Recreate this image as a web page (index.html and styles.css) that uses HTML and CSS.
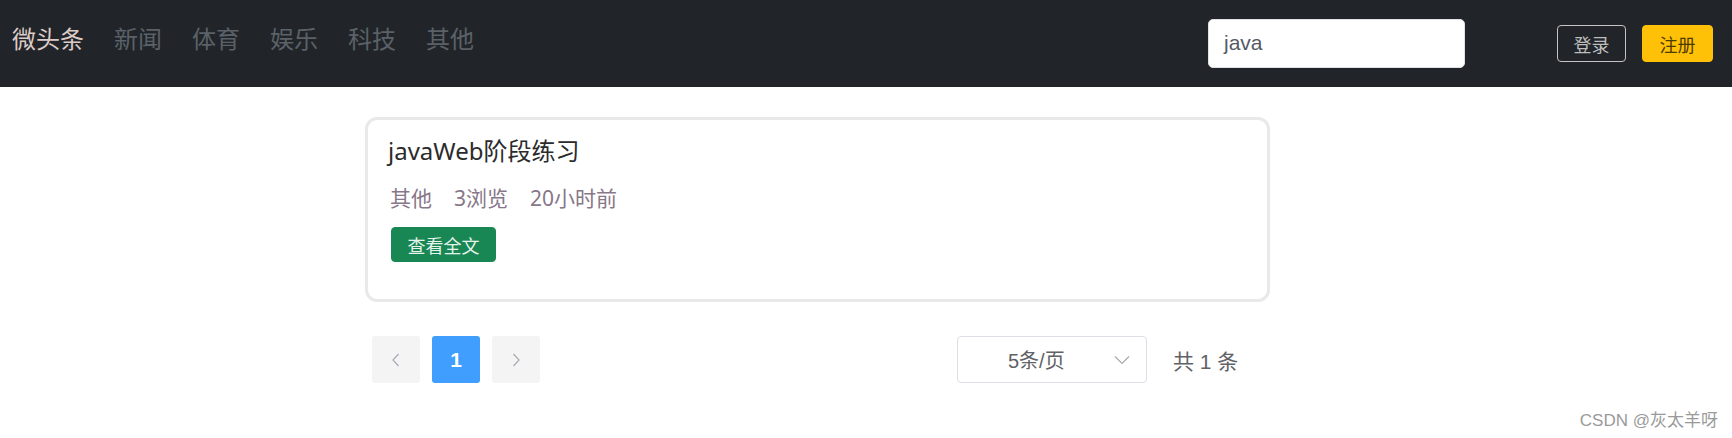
FILE: index.html
```html
<!DOCTYPE html>
<html lang="zh-CN">
<head>
<meta charset="utf-8">
<title>微头条</title>
<link rel="stylesheet" href="styles.css">
</head>
<body>
<header class="navbar">
  <nav class="nav-left">
    <a class="brand">微头条</a>
    <a class="nav-link">新闻</a>
    <a class="nav-link">体育</a>
    <a class="nav-link">娱乐</a>
    <a class="nav-link">科技</a>
    <a class="nav-link">其他</a>
  </nav>
  <div class="nav-right">
    <div class="search">java</div>
    <button class="btn btn-login">登录</button>
    <button class="btn btn-register">注册</button>
  </div>
</header>
<main class="main">
  <article class="card">
    <h2 class="card-title">javaWeb阶段练习</h2>
    <div class="meta">
      <span>其他</span>
      <span>3浏览</span>
      <span>20小时前</span>
    </div>
    <button class="btn-read">查看全文</button>
  </article>
  <div class="pagination">
    <div class="pager-btn">
      <svg width="8" height="14" viewBox="0 0 8 14"><path d="M6.5 1 L1 7 L6.5 13" fill="none" stroke="#a8abb2" stroke-width="1.2"/></svg>
    </div>
    <div class="pager-btn active">1</div>
    <div class="pager-btn">
      <svg width="8" height="14" viewBox="0 0 8 14"><path d="M1.5 1 L7 7 L1.5 13" fill="none" stroke="#a8abb2" stroke-width="1.2"/></svg>
    </div>
    <div class="sizes">
      <span class="sizes-text">5条/页</span>
      <svg class="chev" width="16" height="10" viewBox="0 0 16 10"><path d="M1 1.5 L8 8.5 L15 1.5" fill="none" stroke="#a8abb2" stroke-width="1.2"/></svg>
    </div>
    <div class="total">共 1 条</div>
  </div>
</main>
<div class="watermark">CSDN @灰太羊呀</div>
</body>
</html>
```

FILE: styles.css
```css
* { box-sizing: border-box; }
html, body { margin: 0; padding: 0; }
body {
  width: 1732px;
  height: 438px;
  background: #ffffff;
  font-family: "Noto Sans", "Noto Sans CJK SC", sans-serif;
  position: relative;
  overflow: hidden;
}
.navbar {
  height: 87px;
  background: #212529;
  display: flex;
  align-items: center;
  padding: 0 19px 0 12px;
}
.nav-left {
  display: flex;
  align-items: center;
  gap: 30px;
  margin-bottom: 11px;
}
.brand, .nav-link {
  font-size: 24px;
  line-height: 32px;
  font-family: "Noto Sans CJK SC", sans-serif;
  text-decoration: none;
}
.brand { color: #dccbc6; }
.nav-link { color: #5b6168; }
.nav-right {
  margin-left: auto;
  display: flex;
  align-items: center;
}
.search {
  width: 257px;
  height: 49px;
  background: #fff;
  border: 1px solid #dee2e6;
  border-radius: 5px;
  padding-left: 15px;
  font-family: "Liberation Sans", Arial, sans-serif;
  font-size: 21px;
  line-height: 45px;
  color: #555a66;
}
.btn {
  height: 37px;
  border-radius: 4px;
  font-family: "Noto Sans CJK SC", sans-serif;
  font-size: 18px;
  line-height: 1;
  padding: 0;
  cursor: pointer;
}
.btn-login {
  width: 69px;
  margin-left: 92px;
  background: transparent;
  border: 1px solid #c4c4c4;
  color: #bdbdbd;
}
.btn-register {
  width: 71px;
  margin-left: 16px;
  background: #ffc107;
  border: 1px solid #ffc107;
  color: #4d3b00;
}
.main {
  padding-left: 365px;
  padding-top: 30px;
}
.card {
  width: 905px;
  height: 185px;
  border: 3px solid #e9e9e9;
  border-radius: 12px;
  padding: 15px 20px 0 20px;
}
.card-title {
  margin: 0;
  font-family: "Noto Sans", "Noto Sans CJK SC", sans-serif;
  font-weight: 400;
  font-size: 24px;
  line-height: 32px;
  color: #2b2b2b;
}
.meta {
  margin-top: 17px;
  display: flex;
  gap: 22px;
  padding-left: 2px;
  font-family: "Noto Sans", "Noto Sans CJK SC", sans-serif;
  font-size: 21px;
  line-height: 28px;
  color: #877788;
}
.btn-read {
  margin-top: 15px;
  margin-left: 3px;
  height: 35px;
  width: 105px;
  background: #198754;
  border: 1px solid #198754;
  border-radius: 4px;
  color: #e6f3ec;
  font-family: "Noto Sans CJK SC", sans-serif;
  font-size: 18px;
  line-height: 1;
  padding: 0;
}
.pagination {
  display: flex;
  align-items: center;
  margin-top: 34px;
  padding-left: 7px;
  height: 47px;
}
.pager-btn {
  width: 48px;
  height: 47px;
  background: #f4f4f5;
  border-radius: 3px;
  display: flex;
  align-items: center;
  justify-content: center;
  margin-right: 12px;
  font-family: "Liberation Sans", Arial, sans-serif;
  font-weight: 700;
  font-size: 21px;
  color: #fff;
}
.pager-btn.active { background: #409eff; }
.sizes {
  margin-left: 405px;
  width: 190px;
  height: 47px;
  border: 1px solid #dcdfe6;
  border-radius: 4px;
  display: flex;
  align-items: center;
  position: relative;
  padding-left: 50px;
}
.sizes-text {
  font-family: "Liberation Sans", "Noto Sans CJK SC", sans-serif;
  font-size: 20px;
  color: #606266;
}
.chev {
  position: absolute;
  right: 16px;
  top: 18px;
}
.total {
  margin-left: 26px;
  font-family: "Liberation Sans", "Noto Sans CJK SC", sans-serif;
  font-size: 21px;
  color: #606266;
}
.watermark {
  position: absolute;
  right: 14px;
  top: 409px;
  font-family: "Liberation Sans", "Noto Sans CJK SC", sans-serif;
  font-size: 17px;
  line-height: 24px;
  color: #9a9a9a;
}
```
